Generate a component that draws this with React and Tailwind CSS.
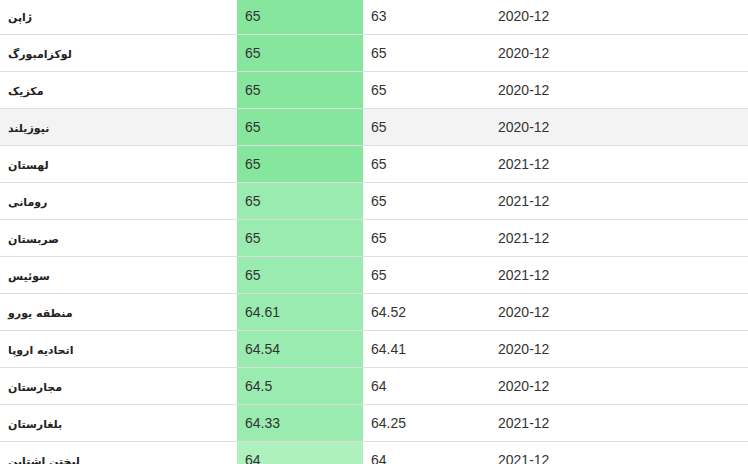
import React from "react";

const rows = [
  ["ژاپن", "65", "63", "2020-12", "bg-[#87e69e]"],
  ["لوکزامبورگ", "65", "65", "2020-12", "bg-[#87e69e]"],
  ["مکزیک", "65", "65", "2020-12", "bg-[#87e69e]"],
  ["نیوزیلند", "65", "65", "2020-12", "bg-[#87e69e]", true],
  ["لهستان", "65", "65", "2021-12", "bg-[#87e69e]"],
  ["رومانی", "65", "65", "2021-12", "bg-[#9aebaf]"],
  ["صربستان", "65", "65", "2021-12", "bg-[#9aebaf]"],
  ["سوئیس", "65", "65", "2021-12", "bg-[#9aebaf]"],
  ["منطقه یورو", "64.61", "64.52", "2020-12", "bg-[#9aebaf]"],
  ["اتحادیه اروپا", "64.54", "64.41", "2020-12", "bg-[#9aebaf]"],
  ["مجارستان", "64.5", "64", "2020-12", "bg-[#9aebaf]"],
  ["بلغارستان", "64.33", "64.25", "2021-12", "bg-[#9aebaf]"],
  ["لیختن اشتاین", "64", "64", "2021-12", "bg-[#aef0be]"],
];

export default function App() {
  return (
    <div className="w-[748px] h-[464px] overflow-hidden bg-white">
      <table
        className="-mt-[3px] w-[748px] border-collapse table-fixed text-[14px] text-[#333]"
        style={{ fontFamily: "'Liberation Sans', Arial, sans-serif" }}
      >
        <colgroup>
          <col className="w-[237px]" />
          <col className="w-[126px]" />
          <col className="w-[127px]" />
          <col />
        </colgroup>
        <tbody>
          {rows.map(([name, a, b, d, green, hl], i) => (
            <tr key={i} className={hl ? "bg-[#f3f3f3]" : "bg-white"}>
              <td className="h-[37px] border-t border-[#dddddd] px-2 p-0 text-left align-middle">
                <span
                  dir="rtl"
                  className="font-bold text-[11px] text-[#222]"
                  style={{ fontFamily: "'DejaVu Sans', sans-serif" }}
                >
                  {name}
                </span>
              </td>
              <td className={`h-[37px] border-t border-[#dddddd] px-2 align-middle ${green}`}>{a}</td>
              <td className="h-[37px] border-t border-[#dddddd] px-2 align-middle">{b}</td>
              <td className="h-[37px] border-t border-[#dddddd] px-2 align-middle">{d}</td>
            </tr>
          ))}
        </tbody>
      </table>
    </div>
  );
}
